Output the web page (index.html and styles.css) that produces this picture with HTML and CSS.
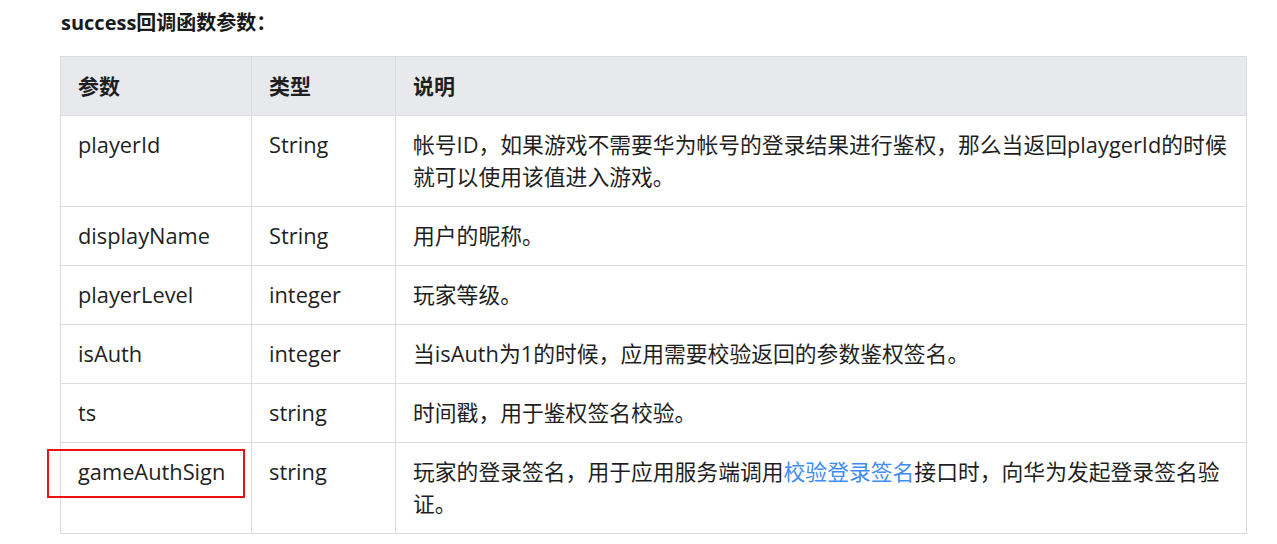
FILE: index.html
```html
<!DOCTYPE html>
<html lang="zh-CN">
<head>
<meta charset="utf-8">
<link rel="stylesheet" href="styles.css">
</head>
<body>
<div class="doc">
  <h4 class="title">success回调函数参数：</h4>
  <table class="params">
    <colgroup>
      <col class="c1">
      <col class="c2">
      <col class="c3">
    </colgroup>
    <thead>
      <tr><th>参数</th><th>类型</th><th>说明</th></tr>
    </thead>
    <tbody>
      <tr><td>playerId</td><td>String</td><td>帐号ID，如果游戏不需要华为帐号的登录结果进行鉴权，那么当返回playgerId的时候就可以使用该值进入游戏。</td></tr>
      <tr><td>displayName</td><td>String</td><td>用户的昵称。</td></tr>
      <tr><td>playerLevel</td><td>integer</td><td>玩家等级。</td></tr>
      <tr><td>isAuth</td><td>integer</td><td>当isAuth为1的时候，应用需要校验返回的参数鉴权签名。</td></tr>
      <tr><td>ts</td><td>string</td><td>时间戳，用于鉴权签名校验。</td></tr>
      <tr><td class="marked"><span class="mark"></span>gameAuthSign</td><td>string</td><td>玩家的登录签名，用于应用服务端调用<a class="link" href="#">校验登录签名</a>接口时，向华为发起登录签名验证。</td></tr>
    </tbody>
  </table>
</div>
</body>
</html>
```
FILE: styles.css
```css
html, body {
  margin: 0;
  padding: 0;
  background: #ffffff;
}
body {
  font-family: "Open Sans", "Noto Sans CJK SC", sans-serif;
  color: #1f1f1f;
}
.doc {
  padding: 9px 0 0 60px;
  width: 1187px;
}
.title {
  margin: 0 0 19px 1px;
  font-size: 20px;
  line-height: 28px;
  font-weight: 700;
  color: #1a1a1a;
}
.params {
  border-collapse: collapse;
  width: 1187px;
  table-layout: fixed;
  font-size: 21.8px;
}
.c1 { width: 191px; }
.c2 { width: 144px; }
.params th,
.params td {
  border: 1px solid #dcdcdc;
  padding: 13px 11px 13px 17px;
  line-height: 32px;
  text-align: left;
  vertical-align: top;
}
.params th {
  background: #e8e9ed;
  font-weight: 700;
  font-size: 21px;
}
.link {
  color: #3f8cf5;
  text-decoration: none;
}
.marked {
  position: relative;
}
.mark {
  position: absolute;
  left: -14px;
  top: 6px;
  width: 194px;
  height: 45px;
  border: 2px solid #ee1111;
}
```
